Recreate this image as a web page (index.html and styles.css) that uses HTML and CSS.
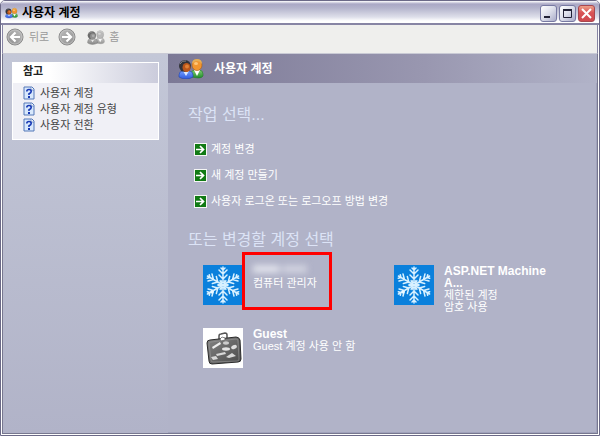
FILE: index.html
```html
<!DOCTYPE html>
<html lang="ko">
<head>
    <meta charset="UTF-8">
    <meta name="viewport" content="width=device-width, initial-scale=1.0">
    <title>사용자 계정</title>
    <link rel="stylesheet" href="styles.css">
</head>
<body>
    <svg class="defs" width="0" height="0" aria-hidden="true">
        <defs>
            <linearGradient id="blue" x1="0" y1="0" x2="0" y2="1"><stop offset="0" stop-color="#6f9cff"/><stop offset="1" stop-color="#2f5ade"/></linearGradient>
            <linearGradient id="green" x1="0" y1="0" x2="0" y2="1"><stop offset="0" stop-color="#7fd070"/><stop offset="1" stop-color="#1f8a2c"/></linearGradient>
            <linearGradient id="disc" x1="0" y1="0" x2="1" y2="1"><stop offset="0" stop-color="#bdbdbd"/><stop offset="1" stop-color="#8e8e8e"/></linearGradient>
            <linearGradient id="case" x1="0" y1="0" x2="1" y2="1"><stop offset="0" stop-color="#858585"/><stop offset="1" stop-color="#4a4a4a"/></linearGradient>
        </defs>
        <symbol id="users" viewBox="0 0 26 20">
            <path d="M13 18v-3q0-4 4-4h4q4 0 4 4v2q-1 2-5 2z" fill="url(#green)" stroke="#257c2c" stroke-width=".6"/>
            <path d="M16 11l3 6 3-6z" fill="#fff"/>
            <ellipse cx="19" cy="6" rx="5" ry="5.6" fill="#f2962f" stroke="#a45d18" stroke-width=".6"/>
            <path d="M14 5q0-5 5-5t5 5q-2-3-5-3t-5 3" fill="#e4b05a"/>
            <ellipse cx="18" cy="4.5" rx="2" ry="1.5" fill="#ffc677"/>
            <path d="M1 18v-2q0-4 4-4h6q4 0 4 4v2q-3 2-7 2t-7-2z" fill="url(#blue)" stroke="#2343a8" stroke-width=".6"/>
            <path d="M5 12l3 5 3-5z" fill="#dce8ff"/>
            <ellipse cx="7" cy="7" rx="6" ry="6" fill="#33343a"/>
            <path d="M2 5q2-4 6-3" stroke="#83868c" fill="none"/>
            <ellipse cx="8.5" cy="8.5" rx="4" ry="4.5" fill="#b9561b"/>
            <ellipse cx="9" cy="7.5" rx="2" ry="2" fill="#e28235"/>
        </symbol>
        <symbol id="help" viewBox="0 0 12 14">
            <path d="M1 1h8l2 2v10H1z" fill="#d8e8fc" stroke="#5478b8"/>
            <path d="M8 1v3h3" fill="#fff" stroke="#5478b8" stroke-width=".7"/>
            <path d="M3.800 5.500q0-2 2.200-2t2.200 2q0 1.300-2.200 2.200V9" fill="none" stroke="#1738b4" stroke-width="1.6"/>
            <path d="M5 10h2v2H5z" fill="#1738b4"/>
        </symbol>
        <symbol id="go" viewBox="0 0 13 13">
            <path d="M0 0h13v13H0z" fill="#f4f6f4"/>
            <path d="M1 1h11v11H1z" fill="#107a14"/>
            <path d="M2 6.500h7M6 3l3.500 3.500L6 10" fill="none" stroke="#fff" stroke-width="1.7"/>
        </symbol>
        <symbol id="arrow" viewBox="0 0 18 18">
            <circle cx="9" cy="9" r="8" fill="url(#disc)" stroke="#8b8b8b"/>
            <circle cx="9" cy="9" r="7" fill="none" stroke="#c9c9c9" stroke-width=".7"/>
            <path d="M4 9h9M8.500 4.500L13 9l-4.500 4.500" fill="none" stroke="#fff" stroke-width="2.2"/>
        </symbol>
        <symbol id="branch" viewBox="-20 -20 40 40">
            <path d="M0 0v-18M0-6l-4-4M0-6l4-4M0-11l-4-4M0-11l4-4M0-15l-2-2M0-15l2-2M-3-4l3 2 3-2" fill="none" stroke="#d9f1ff" stroke-width="1.5" stroke-linecap="round"/>
        </symbol>
        <symbol id="snow" viewBox="0 0 40 40">
            <path d="M0 0h40v40H0z" fill="#0a80dc"/>
            <use href="#branch" width="40" height="40"/>
            <use href="#branch" width="40" height="40" transform="rotate(60 20 20)"/>
            <use href="#branch" width="40" height="40" transform="rotate(120 20 20)"/>
            <use href="#branch" width="40" height="40" transform="rotate(180 20 20)"/>
            <use href="#branch" width="40" height="40" transform="rotate(240 20 20)"/>
            <use href="#branch" width="40" height="40" transform="rotate(300 20 20)"/>
            <path d="M7 27l2-2 2 2-2 2z" fill="#eefaff"/>
        </symbol>
    </svg>

    <div class="window">
        <header class="titlebar">
            <svg class="title-icon"><use href="#users"/></svg>
            <h1 class="title">사용자 계정</h1>
            <div class="window-buttons">
                <button class="window-button" aria-label="최소화"><svg viewBox="0 0 15 15"><path d="M3 10h6v2H3z" fill="#222236"/></svg></button>
                <button class="window-button" aria-label="최대화"><svg viewBox="0 0 15 15"><path d="M3.500 4.500h8v7h-8z" fill="none" stroke="#222236"/><path d="M3 3h9v2H3z" fill="#222236"/></svg></button>
                <button class="window-button close" aria-label="닫기"><svg viewBox="0 0 15 15"><path d="M3 3l9 9M12 3l-9 9" stroke="#fff" stroke-width="2"/></svg></button>
            </div>
        </header>

        <nav class="toolbar">
            <button class="tool back"><svg class="arrow flip"><use href="#arrow"/></svg>뒤로</button>
            <button class="tool forward" aria-label="앞으로"><svg class="arrow"><use href="#arrow"/></svg></button>
            <button class="tool home"><svg class="home-icon"><use href="#users"/></svg>홈</button>
        </nav>

        <div class="content">
            <aside class="sidebar">
                <section class="panel">
                    <h2 class="panel-title">참고</h2>
                    <ul class="help-list">
                        <li><a class="help-link" href="#"><svg class="help-icon"><use href="#help"/></svg>사용자 계정</a></li>
                        <li><a class="help-link" href="#"><svg class="help-icon"><use href="#help"/></svg>사용자 계정 유형</a></li>
                        <li><a class="help-link" href="#"><svg class="help-icon"><use href="#help"/></svg>사용자 전환</a></li>
                    </ul>
                </section>
            </aside>

            <main class="main">
                <div class="banner">
                    <svg class="banner-icon"><use href="#users"/></svg>
                    <h2 class="banner-title">사용자 계정</h2>
                </div>

                <h3 class="heading">작업 선택...</h3>
                <ul class="tasks">
                    <li><a class="task" href="#"><svg class="go-icon"><use href="#go"/></svg>계정 변경</a></li>
                    <li><a class="task" href="#"><svg class="go-icon"><use href="#go"/></svg>새 계정 만들기</a></li>
                    <li><a class="task" href="#"><svg class="go-icon"><use href="#go"/></svg>사용자 로그온 또는 로그오프 방법 변경</a></li>
                </ul>

                <h3 class="heading">또는 변경할 계정 선택</h3>
                <div class="accounts">
                    <a class="account" href="#">
                        <svg class="avatar"><use href="#snow"/></svg>
                        <span class="account-text">
                            <span class="hidden-name"></span>
                            <span>컴퓨터 관리자</span>
                        </span>
                        <span class="highlight"></span>
                    </a>
                    <a class="account" href="#">
                        <svg class="avatar"><use href="#snow"/></svg>
                        <span class="account-text">
                            <b class="name">ASP.NET Machine A...</b>
                            <span>제한된 계정</span>
                            <span>암호 사용</span>
                        </span>
                    </a>
                    <a class="account" href="#">
                        <svg class="avatar" viewBox="0 0 40 40">
                            <path d="M0 0h40v40H0z" fill="#fff"/>
                            <path d="M16 11V8q0-2 2-2l4-1q2 0 2 2v3" fill="none" stroke="#555" stroke-width="1.5"/>
                            <path d="M4 15q0-3 3-3l26-3q3 0 4 3l1 19q0 3-3 3L9 36q-3 0-3-3z" fill="url(#case)" stroke="#2b2b2b"/>
                            <path d="M6 16q0-2 2-2l25-3q2 0 2 2l1 18q0 2-2 2L10 34q-2 0-2-2z" fill="none" stroke="#999" stroke-width=".6"/>
                            <path d="M9 19l8-5 1 2-8 5z" fill="#eee"/>
                            <ellipse cx="23" cy="15" rx="3" ry="1.7" fill="#ccc"/>
                            <ellipse cx="23" cy="21" rx="4" ry="1.7" fill="#e4e4e4"/>
                            <ellipse cx="31" cy="19" rx="3" ry="2" transform="rotate(-25 31 19)" fill="#ddd"/>
                            <path d="M13 26l9-2 1 2-9 2zM8 29l5-1 2 3-5 1zM23 29l6-4 4 3-7 2z" fill="#d8d8d8"/>
                            <path d="M17 11l2-2 3 1v2l-4 1z" fill="#fff" stroke="#555" stroke-width=".7"/>
                        </svg>
                        <span class="account-text">
                            <b class="name">Guest</b>
                            <span>Guest 계정 사용 안 함</span>
                        </span>
                    </a>
                </div>
            </main>
        </div>
    </div>
</body>
</html>
```

FILE: styles.css
```css
* {
    box-sizing: border-box;
}
body {
    margin: 0;
    font-family: "Liberation Sans", "Noto Sans CJK KR", sans-serif;
    font-size: 11px;
    line-height: 12px;
    background: #fff;
}
h1, h2, h3, ul {
    margin: 0;
    padding: 0;
}
ul {
    list-style: none;
}
a {
    color: inherit;
    text-decoration: none;
}
button {
    font: inherit;
    padding: 0;
    border: 0;
    background: none;
}
svg {
    display: block;
    flex: none;
}
.defs {
    position: absolute;
}
.window {
    display: flex;
    flex-direction: column;
    min-height: 100vh;
    border: 1px solid #6b6987;
    border-radius: 5px 5px 0 0;
}
.titlebar {
    display: flex;
    align-items: center;
    height: 24px;
    padding: 2px 4px 0;
    border-bottom: 2px solid #8785a4;
    border-radius: 4px 4px 0 0;
    background: linear-gradient(#fff 0, #aaa8c5 3px, #b4b4cc 7px, #dedfea 16px, #fff 20px);
}
.title-icon {
    width: 13px;
    height: 12px;
}
.title {
    flex: 1;
    margin-left: 4px;
    font-size: 12px;
    color: #000;
}
.window-buttons {
    display: flex;
    gap: 2px;
}
.window-button {
    width: 17px;
    height: 17px;
    border: 1px solid #7779a2;
    border-radius: 3px;
    background: linear-gradient(135deg, #fff, #dcdeea 50%, #a9abc9);
}
.close {
    border-color: #a8474f;
    background: linear-gradient(#eda087, #d95356 45%, #cf4a50);
}
.toolbar {
    display: flex;
    align-items: center;
    height: 28px;
    margin: 0 1px;
    padding: 0 3px 4px;
    border-left: 1px solid #8785a4;
    border-right: 1px solid #8785a4;
    background: #efefed;
}
.tool {
    display: flex;
    align-items: center;
    gap: 5px;
    color: #999;
}
.forward {
    margin-left: 9px;
}
.home {
    gap: 4px;
    margin-left: 11px;
}
.arrow {
    width: 18px;
    height: 18px;
}
.flip {
    transform: scaleX(-1);
}
.home-icon {
    width: 18px;
    height: 15px;
    filter: grayscale(1) opacity(0.7);
}
.content {
    flex: 1;
    display: flex;
    margin: 0 1px 1px;
    border: 1px solid #77778f;
    border-top-color: #c9cad5;
    box-shadow: inset 0 0 0 1px #a0a2bb;
    background: #b1b3c8;
}
.sidebar {
    width: 165px;
    padding: 8px 9px;
    background: linear-gradient(#c3c7d7, #b1b3c8);
}
.panel {
    border: 1px solid #fff;
    background: #f0f0f6;
}
.panel-title {
    padding: 2px 10px 6px;
    font-size: 11px;
    color: #222;
    background: linear-gradient(90deg, #fff 25%, #cbccdc);
}
.help-list {
    padding: 2px 10px 6px;
}
.help-link {
    display: flex;
    align-items: center;
    gap: 5px;
    height: 16px;
    color: #444;
}
.help-icon {
    width: 12px;
    height: 14px;
}
.main {
    flex: 1;
    color: #fff;
}
.banner {
    display: flex;
    align-items: center;
    gap: 10px;
    height: 29px;
    padding: 0 10px;
    background: linear-gradient(90deg, #7c7996, #9997b0 60%, #b1b3c8);
}
.banner-icon {
    width: 26px;
    height: 20px;
}
.banner-title {
    font-size: 12px;
}
.heading {
    padding-left: 20px;
    margin-top: 22px;
    font-size: 16px;
    font-weight: normal;
    line-height: 20px;
    color: #dce3f6;
}
.tasks {
    display: grid;
    gap: 12px;
    padding: 17px 26px 0;
}
.task {
    display: flex;
    align-items: center;
    gap: 4px;
    height: 14px;
}
.go-icon {
    width: 13px;
    height: 13px;
}
.accounts {
    display: grid;
    grid-template-columns: 1fr 1fr;
    gap: 23px 0;
    padding: 15px 12px 0 35px;
}
.account {
    position: relative;
    display: flex;
    gap: 10px;
}
.avatar {
    width: 40px;
    height: 40px;
}
.account-text {
    display: flex;
    flex-direction: column;
    max-width: 110px;
    height: 40px;
}
.name {
    font-size: 12px;
}
.hidden-name {
    width: 54px;
    height: 8px;
    margin-bottom: 4px;
    background: linear-gradient(90deg, #dfe1ea 45%, #b9bbce 52%, #d0d2df 60%);
    filter: blur(3px);
}
.highlight {
    position: absolute;
    top: -13px;
    left: 39px;
    width: 90px;
    height: 58px;
    border: 3px solid #f00;
}
```
